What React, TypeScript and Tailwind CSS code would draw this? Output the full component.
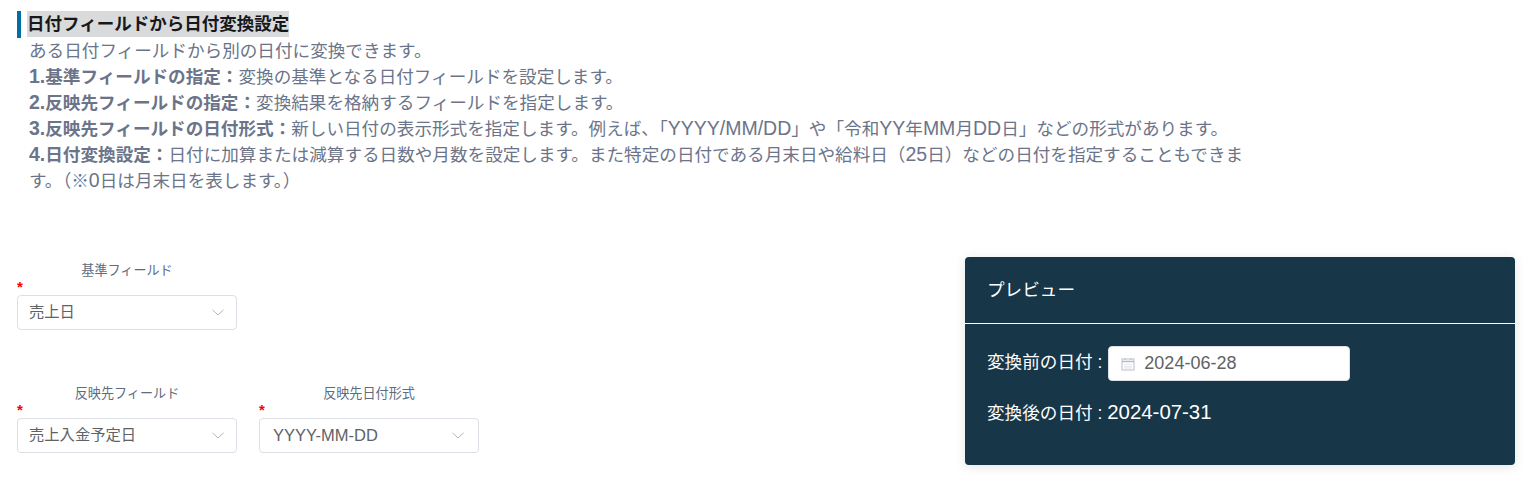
function Chevron({ className }: { className: string }) {
  return (
    <svg width="12" height="7" viewBox="0 0 12 7" fill="none" className={className}>
      <path d="M0.5 0.8 6 6 11.5 0.8" stroke="#b4b7be" strokeWidth="1" />
    </svg>
  )
}

function CalendarIcon() {
  return (
    <svg width="14" height="14" viewBox="0 0 14 14" fill="none" className="text-[#b9bdc7] shrink-0">
      <rect x="1" y="2" width="12" height="11" stroke="currentColor" strokeWidth="1" />
      <path d="M1 4.5h12" stroke="currentColor" strokeWidth="1.6" />
      <path d="M4 1v2M10 1v2" stroke="currentColor" strokeWidth="1" />
      <path d="M3.5 7.5h7M3.5 9.5h7M3.5 11h7" stroke="currentColor" strokeWidth="0.8" strokeDasharray="1 1" />
    </svg>
  )
}

function SelectField({ label, value, latin }: { label: string; value: string; latin?: boolean }) {
  return (
    <div className="w-[220px]">
      <div className="text-center text-[13.1px] leading-[16px] text-[#606c80]">{label}</div>
      <div className="h-[16px] text-[15px] leading-[16px] font-bold text-[#ff0000]">*</div>
      <div className="h-[35px] flex items-center justify-between border border-[#dcdfe6] rounded-[4px] bg-white pl-[11px] pr-[12px]">
        <span className={latin ? 'pl-[2px] text-[16.5px] text-[#606266]' : 'text-[15.3px] text-[#606266]'}>{value}</span>
        <Chevron className={latin ? 'mr-[2px]' : ''} />
      </div>
    </div>
  )
}

// latin runs sit a bit larger than the kana around them
function L({ children }: { children: string }) {
  return <span className="text-[19.5px] leading-none">{children}</span>
}

export default function App() {
  return (
    <div className="min-h-screen bg-white font-['Liberation_Sans','Noto_Sans_CJK_JP',sans-serif] px-[17px] pt-[11px]">
      <div className="border-l-[4px] border-[#006fa6] pl-[6px] h-[27px] flex items-start">
        <span className="bg-[#d9dadc] text-[17.5px] leading-[26px] font-bold text-[#17181a]">日付フィールドから日付変換設定</span>
      </div>
      <div className="-mt-[0.5px] pl-[12px] w-[1232px] text-[17.6px] leading-[26px] text-[#6b7489]">
        <p>ある日付フィールドから別の日付に変換できます。</p>
        <p><b><L>1.</L>基準フィールドの指定：</b>変換の基準となる日付フィールドを設定します。</p>
        <p><b><L>2.</L>反映先フィールドの指定：</b>変換結果を格納するフィールドを指定します。</p>
        <p><b><L>3.</L>反映先フィールドの日付形式：</b>新しい日付の表示形式を指定します。例えば、「<L>YYYY/MM/DD</L>」や「令和<L>YY</L>年<L>MM</L>月<L>DD</L>日」などの形式があります。</p>
        <p><b><L>4.</L>日付変換設定：</b>日付に加算または減算する日数や月数を設定します。また特定の日付である月末日や給料日（<L>25</L>日）などの日付を指定することもできます。（※<L>0</L>日は月末日を表します。）</p>
      </div>
      <div className="flex justify-between items-start mt-[63.5px] pr-[1px]">
        <div className="pt-[6px] flex flex-col gap-[56px]">
          <SelectField label="基準フィールド" value="売上日" />
          <div className="flex gap-[22px]">
            <SelectField label="反映先フィールド" value="売上入金予定日" />
            <SelectField label="反映先日付形式" value="YYYY-MM-DD" latin />
          </div>
        </div>
        <div className="w-[550px] h-[208px] bg-[#173648] rounded-[4px] shadow-[0_2px_12px_rgba(0,0,0,0.1)] text-white">
          <div className="h-[67px] border-b border-white flex items-center px-[22px] text-[17.6px]">プレビュー</div>
          <div className="px-[22px] pt-[22px] text-[17.6px]">
            <div className="flex items-center gap-[6px]">
              <span className="-mt-[2px]">変換前の日付 :</span>
              <div className="w-[242px] h-[35px] bg-white rounded-[4px] border border-[#dcdfe6] flex items-center pl-[12px] gap-[9px]">
                <CalendarIcon />
                <span className="text-[#606266] text-[18px]">2024-06-28</span>
              </div>
            </div>
            <div className="mt-[19px] leading-[24px]">変換後の日付 : <span className="text-[20.4px]">2024-07-31</span></div>
          </div>
        </div>
      </div>
    </div>
  )
}
